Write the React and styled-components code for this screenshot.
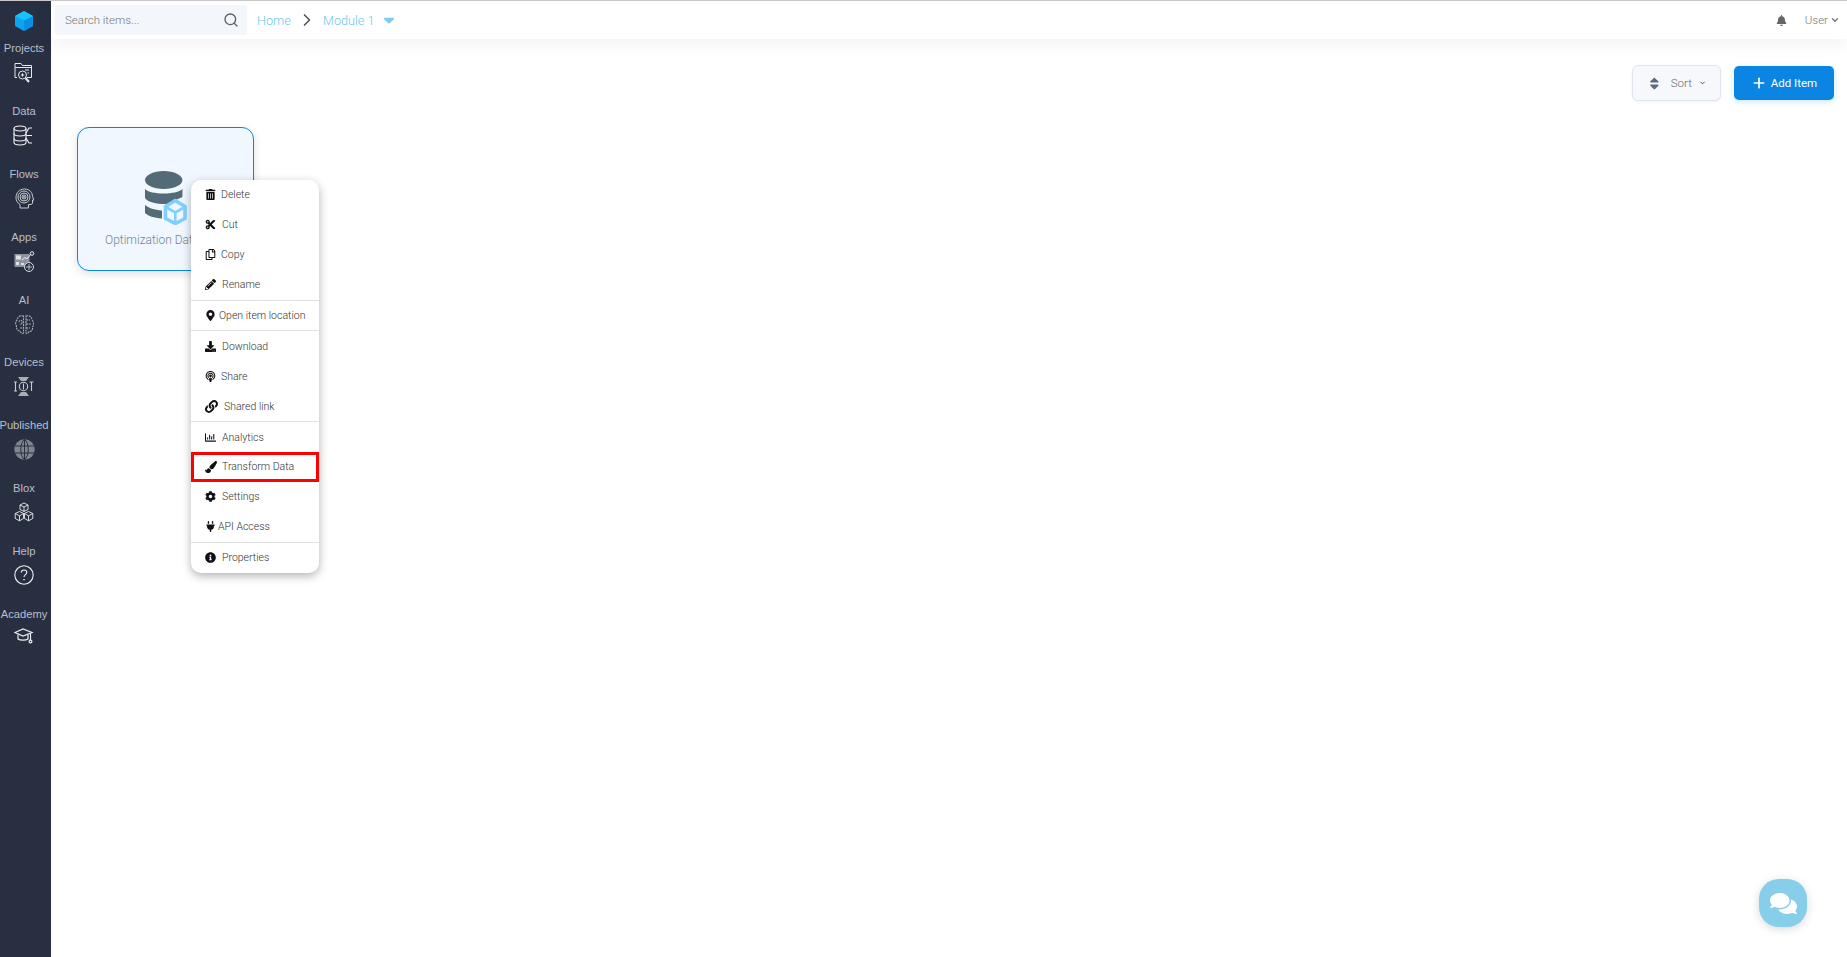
import React from "react";
import styled, { createGlobalStyle } from "styled-components";
import {
  FaTrashAlt,
  FaCut,
  FaRegCopy,
  FaPencilAlt,
  FaMapMarkerAlt,
  FaDownload,
  FaPodcast,
  FaLink,
  FaRegChartBar,
  FaPaintBrush,
  FaCog,
  FaPlug,
  FaInfoCircle,
  FaBell,
  FaComments,
  FaSort,
  FaCaretDown,
} from "react-icons/fa";
import { FiSearch, FiChevronRight, FiChevronDown, FiPlus } from "react-icons/fi";

const GlobalStyle = createGlobalStyle`
  html, body {
    margin: 0;
    padding: 0;
    height: 100%;
    background: #fff;
    font-family: Roboto, "Liberation Sans", sans-serif;
  }
  * {
    box-sizing: border-box;
  }
`;

const LogoIcon = () => (
  <svg width="18" height="20" viewBox="0 0 18 20">
    <path d="M9 0 L18 5 V15 L9 20 L0 15 V5 Z" fill="#0aa5f0" />
    <path d="M9 9.5 L18 5 V15 L9 20 Z" fill="#0a8fe0" />
    <path d="M9 0 L18 5 L9 9.5 L0 5 Z" fill="#16c2fb" />
  </svg>
);

const ProjectsIcon = () => (
  <svg width="19" height="21" viewBox="0 0 19 21" fill="none" stroke="#e6e8ec" strokeWidth="1">
    <path d="M3 15.5 H1 V1.5 H7 L8.5 3.5 H17.5 V15.5 H13" />
    <path d="M1 5.5 H17.5" />
    <path d="M11 8 H15 M13.5 11 H15" />
    <circle cx="8.5" cy="13" r="4" />
    <path d="M6.8 13 H10.2 M8.5 11.3 V14.7" />
    <path d="M11.5 16 L15 20" strokeWidth="2" />
  </svg>
);

const DataIcon = () => (
  <svg width="21" height="21" viewBox="0 0 21 21" fill="none" stroke="#f0f1f3" strokeWidth="1.1">
    <ellipse cx="7" cy="3.5" rx="6" ry="2.5" />
    <path d="M1 3.5 V17.5 C1 19 4 20 7 20 C10 20 13 19 13 17.5 V3.5" />
    <path d="M1 8.5 C1 10 4 11 7 11 C10 11 13 10 13 8.5" />
    <path d="M1 13.5 C1 15 4 16 7 16 C10 16 13 15 13 13.5" />
    <path d="M13 8 L16 3 H19 M13 10.5 H19 M13 13 L16 18 H19" />
  </svg>
);

const FlowsIcon = () => (
  <svg width="19" height="21" viewBox="0 0 19 21" fill="none" stroke="#d8dbe0" strokeWidth="0.9">
    <path d="M5 20 V16.5 C2.5 15 1 12.5 1 9.5 C1 4.5 4.5 1 9.5 1 C14.5 1 17.5 4.5 17.5 8.5 L19 12 H17.5 V15 C17.5 16 16.5 16.5 15 16.5 H13.5 V20 Z" />
    <circle cx="9" cy="9" r="6" />
    <circle cx="9" cy="9" r="4" />
    <circle cx="9" cy="9" r="2" />
    <circle cx="9" cy="9" r="0.6" />
  </svg>
);

const AppsIcon = () => (
  <svg width="21" height="21" viewBox="0 0 21 21" fill="none">
    <rect x="0.5" y="3" width="15" height="13" fill="#8e939d" />
    <rect x="2" y="4.5" width="5" height="4" fill="#dfe1e5" />
    <rect x="2" y="11" width="3" height="3" fill="#dfe1e5" />
    <rect x="7" y="12" width="3" height="2" fill="#dfe1e5" />
    <path d="M8 9 L11 6.5 L13 8 L17 3" stroke="#eceef1" strokeWidth="1" />
    <circle cx="18" cy="2.5" r="1.8" stroke="#eceef1" />
    <circle cx="15" cy="16" r="4.5" fill="#282f41" stroke="#d8dbe0" />
    <path d="M12 16 H18 M15 13 V19" stroke="#d8dbe0" strokeWidth="0.8" />
  </svg>
);

const AiIcon = () => (
  <svg width="21" height="21" viewBox="0 0 21 21" fill="none" stroke="#a9adb6" strokeWidth="1.1" strokeDasharray="2 0.8">
    <path d="M9.5 2 C6 1 3.5 3 3.5 5.5 C1.5 7 1 10 2.5 12 C2 15 4 17 6 17 C7 19.5 9 20 9.5 19 Z" />
    <path d="M12 2 C15 1 18 3 18 6 C20 8 20 11 18.5 13 C19 16 17 18 15 17.5 C14 19.5 12.5 20 12 19 Z" />
    <path d="M5 8 C6 5 9 6 8 9 L6 11 M6 14 H9" />
    <path d="M12 6 H16 M12 10 H17 M12 14 H16" />
  </svg>
);

const DevicesIcon = () => (
  <svg width="21" height="21" viewBox="0 0 21 21" fill="none" stroke="#c9ccd2">
    <path d="M5 1 H16 L13 5 H8 Z" fill="#a9adb6" stroke="none" />
    <path d="M5 20 H16 L13 16 H8 Z" fill="#a9adb6" stroke="none" />
    <circle cx="10.5" cy="10.5" r="4.2" strokeWidth="1.1" />
    <path d="M10.5 7.5 V13.5" strokeWidth="1.1" />
    <path d="M1 6 H4 M2.5 6 V15 M1 15 H4" strokeWidth="1.1" />
    <path d="M16.5 6 H20.5 M18.5 6 V15" strokeWidth="1.1" />
  </svg>
);

const GlobeIcon = () => (
  <svg width="21" height="21" viewBox="0 0 21 21">
    <circle cx="10.5" cy="10.5" r="10.2" fill="#7f8690" />
    <path
      d="M10.5 0.3 V20.7 M0.3 7 H20.7 M0.3 14 H20.7 M10.5 0.3 C5.5 4 5.5 17 10.5 20.7 M10.5 0.3 C15.5 4 15.5 17 10.5 20.7"
      fill="none"
      stroke="#282f41"
      strokeWidth="1"
    />
  </svg>
);

const BloxIcon = () => (
  <svg width="20" height="20" viewBox="0 0 20 20" fill="none" stroke="#eceef1" strokeWidth="0.9">
    <path d="M10 1 L14 3 V7.5 L10 9.5 L6 7.5 V3 Z M6 3 L10 5 L14 3 M10 5 V9.5" />
    <path d="M5.5 9.5 L9.5 11.5 V16.5 L5.5 18.8 L1.2 16.5 V11.5 Z M1.2 11.5 L5.5 13.8 L9.5 11.5 M5.5 13.8 V18.8" />
    <path d="M14.5 9.5 L18.8 11.5 V16.5 L14.5 18.8 L10.5 16.5 V11.5 Z M10.5 11.5 L14.5 13.8 L18.8 11.5 M14.5 13.8 V18.8" />
  </svg>
);

const HelpIcon = () => (
  <svg width="20" height="20" viewBox="0 0 20 20" fill="none" stroke="#f0f1f3" strokeWidth="1.1">
    <circle cx="10" cy="10" r="9.2" />
    <path d="M7.3 7.6 C7.3 5.9 8.6 5 10 5 C11.6 5 12.8 6 12.8 7.5 C12.8 9.6 10 9.7 10 12" />
    <path d="M10 14 V15.3" strokeWidth="1.4" />
  </svg>
);

const AcademyIcon = () => (
  <svg width="20" height="17" viewBox="0 0 20 17" fill="none" stroke="#eceef1" strokeWidth="1.2">
    <path d="M1 4.5 L9 1 L18 4.5 L9 8 Z" />
    <path d="M4 6.5 V11 C6 12.5 12 12.5 14 11 V6.5" />
    <path d="M16.5 5.5 V12" />
    <circle cx="16.5" cy="13.5" r="1.4" />
  </svg>
);

const DatasetIcon = () => (
  <svg width="42" height="54" viewBox="0 0 42 54">
    <ellipse cx="18.7" cy="9" rx="18.7" ry="9" fill="#536b76" />
    <path d="M0 18 C5 24 32 24 37.4 18 V26 L22 33 C10 33 3 31 0 27 Z" fill="#536b76" />
    <path d="M0 34 C4 37 9 39 17 39.5 L17 47.5 C9 47 3 45 0 42 Z" fill="#536b76" />
    <path d="M30.3 29.5 L40 35.5 V47.5 L30.3 52.5 L20.5 47.5 V35.5 Z" fill="#f0f7ff" stroke="#7fd0ff" strokeWidth="3.6" strokeLinejoin="round" />
    <path d="M21.5 36.5 L30.3 41.5 L39 36.5 M30.3 41.5 V51" fill="none" stroke="#7fd0ff" strokeWidth="2.6" />
  </svg>
);

const navItems = [
  { label: "Projects", Icon: ProjectsIcon },
  { label: "Data", Icon: DataIcon },
  { label: "Flows", Icon: FlowsIcon },
  { label: "Apps", Icon: AppsIcon },
  { label: "AI", Icon: AiIcon },
  { label: "Devices", Icon: DevicesIcon },
  { label: "Published", Icon: GlobeIcon },
  { label: "Blox", Icon: BloxIcon },
  { label: "Help", Icon: HelpIcon },
  { label: "Academy", Icon: AcademyIcon },
];

const menuGroups = [
  [
    { label: "Delete", Icon: FaTrashAlt, gap: 5 },
    { label: "Cut", Icon: FaCut, gap: 6 },
    { label: "Copy", Icon: FaRegCopy, gap: 5 },
    { label: "Rename", Icon: FaPencilAlt, gap: 6 },
  ],
  [{ label: "Open item location", Icon: FaMapMarkerAlt, gap: 3 }],
  [
    { label: "Download", Icon: FaDownload, gap: 6 },
    { label: "Share", Icon: FaPodcast, gap: 5 },
    { label: "Shared link", Icon: FaLink, gap: 6, size: 13 },
  ],
  [
    { label: "Analytics", Icon: FaRegChartBar, gap: 6 },
    { label: "Transform Data", Icon: FaPaintBrush, gap: 5, size: 12, active: true },
    { label: "Settings", Icon: FaCog, gap: 6 },
    { label: "API Access", Icon: FaPlug, gap: 2 },
  ],
  [{ label: "Properties", Icon: FaInfoCircle, gap: 6 }],
];

const App = () => {
  return (
    <Page>
      <GlobalStyle />
      <Sidebar>
        <Logo>
          <LogoIcon />
        </Logo>
        {navItems.map(({ label, Icon }) => (
          <NavItem key={label}>
            <NavLabel>{label}</NavLabel>
            <NavIcon>
              <Icon />
            </NavIcon>
          </NavItem>
        ))}
      </Sidebar>
      <Main>
        <TopBar>
          <SearchBox>
            <SearchText>Search items...</SearchText>
            <FiSearch size={16} color="#55606a" />
          </SearchBox>
          <Crumb>Home</Crumb>
          <CrumbSep>
            <FiChevronRight size={20} />
          </CrumbSep>
          <Crumb>Module 1</Crumb>
          <CrumbCaret>
            <FaCaretDown size={18} />
          </CrumbCaret>
          <TopRight>
            <FaBell size={11} color="#666" />
            <UserName>
              User <FiChevronDown size={10} strokeWidth={3} />
            </UserName>
          </TopRight>
        </TopBar>
        <Content>
          <Toolbar>
            <SortButton>
              <FaSort size={15} color="#5f6b7a" />
              <SortLabel>Sort</SortLabel>
              <FiChevronDown size={10} color="#444" strokeWidth={3} />
            </SortButton>
            <AddButton>
              <FiPlus size={16} strokeWidth={2.5} />
              Add Item
            </AddButton>
          </Toolbar>
          <Card>
            <DatasetIcon />
            <CardName>Optimization Data</CardName>
          </Card>
          <ContextMenu>
            {menuGroups.map((group, i) => (
              <MenuGroup key={i}>
                {group.map(({ label, Icon, gap, size, active }) => (
                  <MenuItem key={label} $gap={gap} $active={active}>
                    <Icon size={size || 11} color="#111" />
                    {label}
                  </MenuItem>
                ))}
              </MenuGroup>
            ))}
          </ContextMenu>
        </Content>
      </Main>
      <ChatButton>
        <FaComments size={27} color="#fff" />
      </ChatButton>
    </Page>
  );
};

const Page = styled.div`
  position: relative;
  display: flex;
  height: 957px;
  overflow: hidden;
  border-top: 1px solid #c8c8c8;
`;

const Sidebar = styled.nav`
  flex: 0 0 51px;
  min-width: 0;
  display: flex;
  flex-direction: column;
  align-items: center;
  padding: 10px 3px 0 0;
  background: #282f41;
`;

const Logo = styled.div`
  height: 20px;
  margin-bottom: 9px;
`;

const NavItem = styled.div`
  display: flex;
  flex-direction: column;
  align-items: center;
  height: 62.9px;
`;

const NavLabel = styled.div`
  height: 16px;
  line-height: 16px;
  font-family: "Liberation Sans", Arial, sans-serif;
  font-size: 11.2px;
  color: #b7bfcc;
  white-space: nowrap;
`;

const NavIcon = styled.div`
  display: flex;
  justify-content: center;
  margin-top: 6px;
  height: 22px;
`;

const Main = styled.div`
  flex: 1;
  display: flex;
  flex-direction: column;
  min-width: 0;
`;

const TopBar = styled.header`
  position: relative;
  z-index: 1;
  display: flex;
  align-items: center;
  height: 38px;
  padding: 0 7px 0 4px;
  background: #fff;
  box-shadow: 0 4px 20px rgba(0, 0, 0, 0.06);
`;

const SearchBox = styled.div`
  display: flex;
  align-items: center;
  justify-content: space-between;
  width: 192px;
  height: 30px;
  margin-right: 10px;
  padding: 0 8px 0 10px;
  border-radius: 3px;
  background: #f3f6fb;
`;

const SearchText = styled.span`
  font-size: 11.5px;
  font-weight: 300;
  color: #777;
`;

const Crumb = styled.span`
  font-size: 12.7px;
  font-weight: 300;
  color: #6fc6ee;
`;

const CrumbSep = styled.span`
  display: flex;
  margin: 0 6px;
  color: #555;
`;

const CrumbCaret = styled.span`
  display: flex;
  margin-left: 5px;
  color: #7fcdf0;
`;

const TopRight = styled.div`
  display: flex;
  align-items: center;
  gap: 18px;
  margin-left: auto;
`;

const UserName = styled.span`
  display: flex;
  align-items: center;
  gap: 2px;
  font-size: 11.5px;
  font-weight: 300;
  color: #777;
`;

const Content = styled.main`
  position: relative;
  flex: 1;
  padding: 26px 13px 0 26px;
`;

const Toolbar = styled.div`
  display: flex;
  justify-content: flex-end;
  align-items: center;
  gap: 13px;
`;

const SortButton = styled.button`
  display: flex;
  align-items: center;
  width: 89px;
  height: 36px;
  padding: 0 14px 0 16px;
  border: 1px solid #dfe5ee;
  border-radius: 6px;
  background: #f6f8fc;
  box-shadow: 0 1px 3px rgba(0, 0, 0, 0.06);
  font-family: inherit;
`;

const SortLabel = styled.span`
  margin: 0 7px 0 11px;
  font-size: 11.5px;
  font-weight: 300;
  color: #666;
`;

const AddButton = styled.button`
  display: flex;
  align-items: center;
  justify-content: center;
  gap: 4px;
  width: 100px;
  height: 34px;
  border: 0;
  border-radius: 5px;
  background: #0a85e3;
  box-shadow: 0 2px 6px rgba(10, 133, 227, 0.2);
  color: #fff;
  font-family: inherit;
  font-size: 11.5px;
  font-weight: 400;
`;

const Card = styled.div`
  display: flex;
  flex-direction: column;
  align-items: center;
  width: 177px;
  height: 144px;
  margin-top: 26px;
  padding-top: 43px;
  border: 1px solid #0a85e3;
  border-radius: 12px;
  background: #f0f7ff;
  box-shadow: 0 3px 10px rgba(0, 0, 0, 0.12);
`;

const CardName = styled.div`
  align-self: flex-start;
  margin: 8px 0 0 27px;
  font-size: 12px;
  font-weight: 300;
  color: #78848f;
  white-space: nowrap;
`;

const ContextMenu = styled.div`
  position: absolute;
  left: 140px;
  top: 141px;
  width: 128px;
  border-radius: 10px;
  background: #fff;
  box-shadow: 0 3px 10px rgba(0, 0, 0, 0.3);
`;

const MenuGroup = styled.div`
  & + & {
    border-top: 1px solid #e0e0e0;
  }
`;

const MenuItem = styled.div`
  display: flex;
  align-items: center;
  gap: ${(p) => p.$gap}px;
  height: 29.9px;
  padding-left: 14px;
  font-size: 10.5px;
  font-weight: 300;
  color: #333;
  white-space: nowrap;
  ${(p) => p.$active && "outline: 3px solid #f00; outline-offset: -3px;"}
`;

const ChatButton = styled.div`
  position: absolute;
  right: 40px;
  bottom: 30px;
  display: flex;
  align-items: center;
  justify-content: center;
  width: 48px;
  height: 48px;
  border-radius: 20px;
  background: #87ceeb;
  box-shadow: 0 2px 10px rgba(0, 0, 0, 0.15);
`;

export default App;
